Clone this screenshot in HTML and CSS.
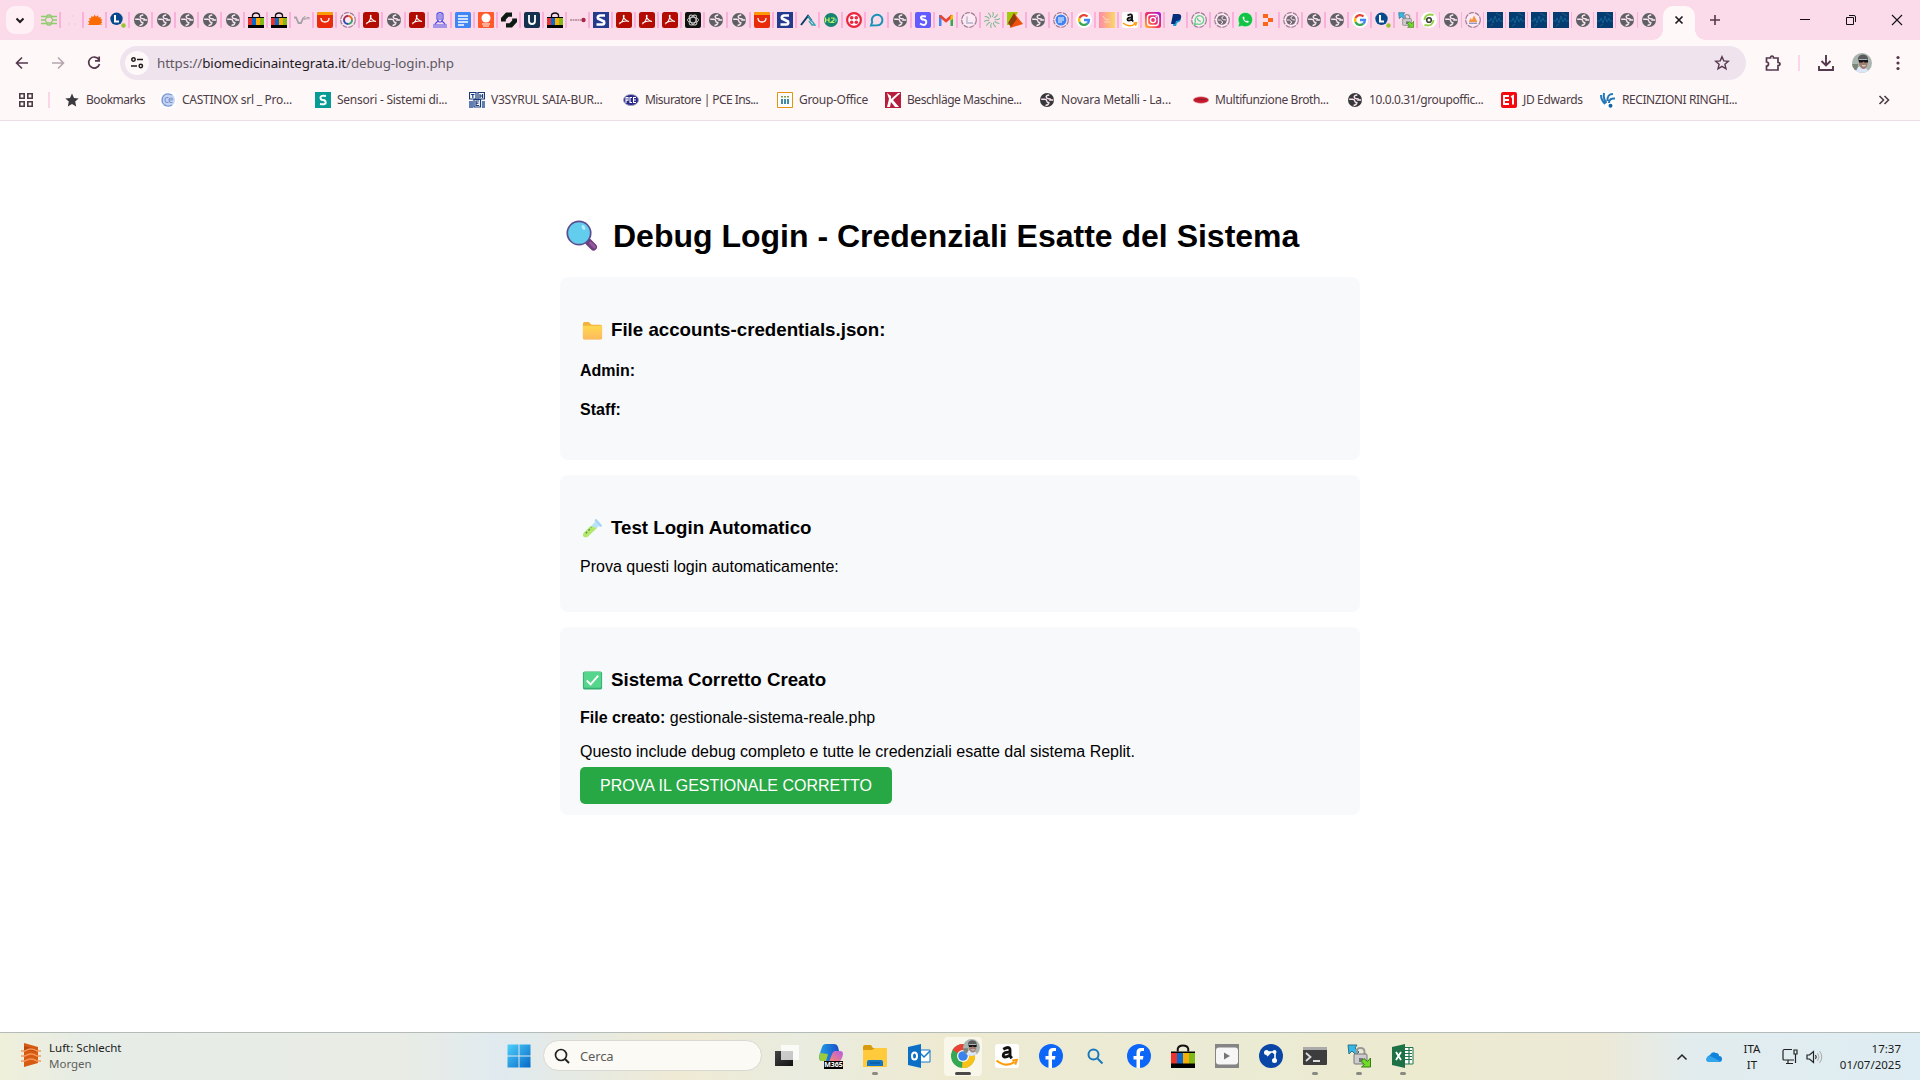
FILE: index.html
```html
<!DOCTYPE html>
<html lang="it">
<head>
<meta charset="utf-8">
<title>Debug Login</title>
<link rel="stylesheet" href="styles.css">
</head>
<body>
<svg class="defs" aria-hidden="true">
  <defs>
    <linearGradient id="g-insta" x1="0" y1="1" x2="1" y2="0"><stop offset="0" stop-color="#ffc233"/><stop offset=".45" stop-color="#f5315c"/><stop offset="1" stop-color="#a21be0"/></linearGradient>
    <linearGradient id="g-peach" x1="0" y1="0" x2="1" y2="0"><stop offset="0" stop-color="#fd8ba8"/><stop offset="1" stop-color="#fdd765"/></linearGradient>
    <linearGradient id="g-win" x1="0" y1="0" x2="1" y2="1"><stop offset="0" stop-color="#4fd0fb"/><stop offset="1" stop-color="#0568c8"/></linearGradient>
    <linearGradient id="g-folder" x1="0" y1="0" x2="0" y2="1"><stop offset="0" stop-color="#ffd84f"/><stop offset="1" stop-color="#fdb95e"/></linearGradient>
    <linearGradient id="g-dark" x1="0" y1="0" x2="1" y2="1"><stop offset="0" stop-color="#444"/><stop offset="1" stop-color="#111"/></linearGradient>
    <linearGradient id="g-m365" x1="0" y1="0" x2="1" y2="0"><stop offset="0" stop-color="#1fa0e8"/><stop offset="1" stop-color="#1a4fc8"/></linearGradient>
    <linearGradient id="g-m365b" x1="0" y1="1" x2="1" y2="0"><stop offset="0" stop-color="#fd8a68"/><stop offset="1" stop-color="#b45be8"/></linearGradient>
  </defs>
  <symbol id="globe" viewBox="0 0 16 16"><circle cx="8" cy="8" r="7" fill="currentColor"/><path d="M10.300 2.900Q7 3.200 7.200 5T9.800 6.700t1.500 1.300h3M2.200 7.300h3.500q2 .2 2.100 1.700t2 1.600q0 2.500-3.300 2.800" fill="none" stroke="#fbe3ee" stroke-width="1.500"/></symbol>
  <symbol id="knot" viewBox="0 0 16 16"><path d="M0 4.500h5l2-1.500h2l2 1.500h5M0 8h4l2-3h4l2 3h4M0 11.500h5l2 1.500h2l2-1.500h5M4 8l2 3h4l2-3" fill="none" stroke="#8fcc6b" stroke-width="1.300"/></symbol>
  <symbol id="faint" viewBox="0 0 16 16"><g fill="#f3cfe0"><circle cx="9" cy="4" r="1"/><circle cx="5" cy="12" r="1.200"/><circle cx="11" cy="12" r="1"/></g></symbol>
  <symbol id="sun" viewBox="0 0 16 16"><path d="M1 13l1.500-2L.8 9.500l2-.8L2 6l2 .3L4.500 4l1.700 1L7.500 2.800 9 4.800 11 3.200l.6 2.200 2.200-.5L13.500 7l2 .7-1.300 1.500 1.300 1.600-1.700.4 1.200 2-2-.8-1 .6H4z" fill="#fb6b04"/></symbol>
  <symbol id="ell" viewBox="0 0 16 16"><circle cx="6.500" cy="6.800" r="6.200" fill="#07498d"/><path d="M5 3v6.500h4" fill="none" stroke="#fff" stroke-width="2"/><circle cx="13.500" cy="13.500" r="2.200" fill="#9bc12d"/></symbol>
  <symbol id="bag" viewBox="0 0 16 16"><path d="M4.500 5V3.200Q5 1 8 1t3.500 2.200V5" fill="none" stroke="#111" stroke-width="1.300"/><path d="M0 5h16v11H0z" fill="#000"/><path d="M0 6h4v7H0z" fill="#e7322d"/><path d="M4 6h4v7H4z" fill="#0968c9"/><path d="M8 6h4v7H8z" fill="#f8ad08"/><path d="M12 6h4v7h-4z" fill="#82b817"/></symbol>
  <symbol id="vgm" viewBox="0 0 16 16"><path d="M0 5.500h2l2.500 5.500H7l2.500-5.500" fill="none" stroke="#a7a0a6" stroke-width="1.800"/><path d="M11.500 4.800h-1.500v2.400h1.500V6M13 7.500V5l1 1.200L15 5v2.500" fill="none" stroke="#a7a0a6"/></symbol>
  <symbol id="ali" viewBox="0 0 16 16"><rect width="16" height="16" rx="2" fill="#e92b0b"/><path d="M0 3V2q0-2 2-2h12q2 0 2 2v1z" fill="#fb9b05"/><path d="M4 6q0 4 4 4t4-4" fill="none" stroke="#fff" stroke-width="1.300"/></symbol>
  <symbol id="ring" viewBox="0 0 16 16"><circle cx="8" cy="8" r="7.300" fill="#fdeaf4" stroke="#a27b99" stroke-width="1.200" stroke-dasharray="5 1"/></symbol>
  <symbol id="ring-color" viewBox="0 0 16 16"><use href="#ring"/><g fill="none" stroke-width="2"><path d="M8 4a4 4 0 0 1 4 4" stroke="#e56a1e"/><path d="M12 8a4 4 0 0 1-4 4" stroke="#359f6b"/><path d="M8 12a4 4 0 0 1-4-4" stroke="#314bb0"/><path d="M4 8a4 4 0 0 1 4-4" stroke="#a92c58"/></g></symbol>
  <symbol id="pdf" viewBox="0 0 16 16"><rect width="16" height="16" rx="2.500" fill="#b30b00"/><path d="M3 12q4-2 5-8 0-1.500-.7 0 .7 4 5.700 5.500-4-1.500-9.500 1.500" fill="none" stroke="#fff" stroke-width="1.200"/></symbol>
  <symbol id="person" viewBox="0 0 16 16"><path d="M5 2q3-3 6 0v5l-2 3H7L5 7zM6 3h4M6 5h4M6 7h4M3 12l3-3m4 0l3 3M1 13h14M1 15h14" fill="none" stroke="#5050e6" stroke-width="1.200"/></symbol>
  <symbol id="docs" viewBox="0 0 16 16"><rect width="16" height="16" rx="1.500" fill="#4086f4"/><path d="M3 4h10M3 7h10M3 10h10M3 13h6" stroke="#fff" stroke-width="1.500"/></symbol>
  <symbol id="bulb" viewBox="0 0 16 16"><rect width="16" height="16" rx="1" fill="#ff592c"/><circle cx="8" cy="6" r="4.500" fill="#fff"/><path d="M4 12h8M5 14h6" stroke="#fff" stroke-width="1.200"/></symbol>
  <symbol id="links" viewBox="0 0 16 16"><path d="M11 0.500v4.300H7.500L4.800 7.500v2H0V6l5-5.500zM5 15.500v-4.300h3.500L11.200 8.500v-2H16V10l-5 5.500z" fill="#0c1a14"/></symbol>
  <symbol id="you" viewBox="0 0 16 16"><rect width="16" height="16" rx="2" fill="#12314e"/><path d="M5 3v6q0 3 3 3t3-3V3" fill="none" stroke="#fff" stroke-width="1.800"/></symbol>
  <symbol id="dash" viewBox="0 0 16 16"><path d="M0 8h11" stroke="#c59aab" stroke-width="2" stroke-dasharray="2 .5"/><circle cx="13.500" cy="8" r="2.200" fill="#aa2447"/></symbol>
  <symbol id="ess" viewBox="0 0 16 16"><rect width="16" height="16" fill="#243a8f"/><path d="M12 3.500H7Q4 4 5 6.500l6 3q1 3-2 3H3.500" fill="none" stroke="#fff" stroke-width="2.600"/></symbol>
  <symbol id="gpt" viewBox="0 0 16 16"><rect width="16" height="16" rx="2" fill="#111"/><g fill="none" stroke="#ccc" stroke-width=".9"><ellipse cx="8" cy="8" rx="5.500" ry="2.800"/><ellipse cx="8" cy="8" rx="5.500" ry="2.800" transform="rotate(60 8 8)"/><ellipse cx="8" cy="8" rx="5.500" ry="2.800" transform="rotate(120 8 8)"/></g></symbol>
  <symbol id="peak" viewBox="0 0 16 16"><path d="M1 13L8 4l3.500 4.500" fill="none" stroke="#0a4167" stroke-width="2"/><path d="M8 4l7 9h-3L9 9" fill="none" stroke="#2aa5ad" stroke-width="1.400"/></symbol>
  <symbol id="h2" viewBox="0 0 16 16"><circle cx="8" cy="8" r="7" fill="#16836f"/><path d="M2.500 5.500v5M6 5.500v5M2.500 8H6M8 6h3v2L8 10.500h3.500" fill="none" stroke="#c5ef65" stroke-width="1.200"/><path d="M12 6l2.500 2-2.500 3" fill="#35c3b3"/></symbol>
  <symbol id="twilio" viewBox="0 0 16 16"><circle cx="8" cy="8" r="6.900" fill="#fff" stroke="#ed243f" stroke-width="2.200"/><g fill="#ed243f"><circle cx="5.700" cy="5.700" r="1.800"/><circle cx="10.300" cy="5.700" r="1.800"/><circle cx="5.700" cy="10.300" r="1.800"/><circle cx="10.300" cy="10.300" r="1.800"/></g></symbol>
  <symbol id="bubble" viewBox="0 0 16 16"><path d="M2 13.500l1.200-3.500A5.300 5.300 0 1 1 8.500 13.300z" fill="none" stroke="#1994b8" stroke-width="2"/></symbol>
  <symbol id="stripe" viewBox="0 0 16 16"><rect width="16" height="16" rx="2" fill="#635bff"/><path d="M11 4.500Q6 3.500 6 5.500t3 2.300 2 3.500T5 11.500" fill="none" stroke="#fff" stroke-width="2"/></symbol>
  <symbol id="gmail" viewBox="0 0 16 16"><path d="M1 3h2.500v11H1z" fill="#4285f4"/><path d="M12.500 3H15v11h-2.500z" fill="#34a853"/><path d="M2 3.800L8 9l6-5.200" fill="none" stroke="#ea4335" stroke-width="2.800"/><path d="M12.500 4L15 2.500V7l-2.500 1.500z" fill="#fbbc04"/></symbol>
  <symbol id="ring-l" viewBox="0 0 16 16"><use href="#ring"/><path d="M6 4.500v6.500h6" fill="none" stroke="#c3c2d4" stroke-width="1.800"/></symbol>
  <symbol id="swirl" viewBox="0 0 16 16"><g stroke="#79b98c" fill="none"><path id="sw" d="M8 5Q10 4 9 0M8 11q-2 1-1 5"/><use href="#sw" transform="rotate(36 8 8)"/><use href="#sw" transform="rotate(72 8 8)"/><use href="#sw" transform="rotate(108 8 8)"/><use href="#sw" transform="rotate(144 8 8)"/></g></symbol>
  <symbol id="kite" viewBox="0 0 16 16"><path d="M0 0h11L4 13H0z" fill="#a5c90d"/><path d="M7 1l9 11-13 4z" fill="#ef520a"/><path d="M7 1L1 11l3 4 6-8z" fill="#923e0b"/></symbol>
  <symbol id="ring-docs" viewBox="0 0 16 16"><use href="#ring"/><circle cx="8" cy="8" r="5.500" fill="#4084f0"/><path d="M5 6h6M5 8h6M5 10h4" stroke="#fff"/></symbol>
  <symbol id="google" viewBox="0 0 16 16"><circle cx="8" cy="8" r="8" fill="#fff"/><g fill="none" stroke-width="2.300"><path d="M11.500 4.500A5 5 0 0 0 3.500 6" stroke="#ea4335"/><path d="M3.500 6a5 5 0 0 0 0 4" stroke="#fbbc05"/><path d="M3.500 10a5 5 0 0 0 7.800 1.700" stroke="#34a853"/><path d="M11.300 11.700A5 5 0 0 0 13 8H8" stroke="#4285f4"/></g></symbol>
  <symbol id="peach" viewBox="0 0 16 16"><path d="M0 0h16v16H0z" fill="url(#g-peach)"/><path d="M4 4l3 4 3-1M5 10h6" stroke="#ffe3cf" stroke-width=".8" fill="none"/></symbol>
  <symbol id="amazon" viewBox="0 0 16 16"><rect width="16" height="16" rx="2" fill="#fff"/><path d="M5.500 3.500Q10 1 10 4v4l1.200 1.500M10 5.500q-4.500-.3-4.500 2t4.500 0" fill="none" stroke="#111" stroke-width="1.900"/><path d="M1 11q6.500 5 12 1M11.500 11l3-.3-1 3" fill="none" stroke="#ff9a0a" stroke-width="1.400"/></symbol>
  <symbol id="insta" viewBox="0 0 16 16"><rect width="16" height="16" rx="2.500" fill="url(#g-insta)"/><rect x="2.500" y="2.500" width="11" height="11" rx="3" fill="none" stroke="#fff" stroke-width="1.400"/><circle cx="8" cy="8" r="2.600" fill="none" stroke="#fff" stroke-width="1.400"/><circle cx="11.200" cy="4.800" r=".8" fill="#fff"/></symbol>
  <symbol id="paypal" viewBox="0 0 16 16"><path d="M6 4h6q3 5-3 7l-1 3H5z" fill="#1d9bdc"/><path d="M5 2h5q4 0 3 4-1 3-5 3l-1 3H3z" fill="#052e7b"/></symbol>
  <symbol id="ring-wa" viewBox="0 0 16 16"><use href="#ring"/><path d="M3.500 12.500l.9-3A4.300 4.300 0 1 1 6.800 12zM6.300 6q.5 3 3.500 3.500" fill="none" stroke="#63d287" stroke-width="1.300"/></symbol>
  <symbol id="ring-globe" viewBox="0 0 16 16"><use href="#ring"/><circle cx="8" cy="8" r="4.800" fill="#716a72"/><path d="M9.500 4.500Q7 5 8 6.500t4 1.500M4 8h2.500q1.500 1 2 2t-1.500 2" fill="none" stroke="#fdeaf4"/></symbol>
  <symbol id="whatsapp" viewBox="0 0 16 16"><path d="M1 15l1-4a7.200 7.200 0 1 1 3 3z" fill="#13c346" stroke="#fff" stroke-width=".5"/><path d="M5.500 5q.5 5 5.500 5.800L12 9.500l-2-1-1 .8L7 7.200l.6-1L7 4.500z" fill="#fff"/></symbol>
  <symbol id="replit" viewBox="0 0 16 16"><path d="M3 2h5v4H3zM8 6h5v4H8zM3 10h5v4H3z" fill="#fd6418"/></symbol>
  <symbol id="lock" viewBox="0 0 24 24"><path d="M1 1h9L8 4l4 4-3 3-4-4-3 3z" fill="#36b7e6" stroke="#2c738b"/><path d="M9.500 12V8q0-4 4-4t4 4v4" fill="none" stroke="#999" stroke-width="2"/><rect x="7" y="10" width="13" height="10" rx="1" fill="#ccc" stroke="#777"/><path d="M12 14h4v4h-4z" fill="#777"/><path d="M23.500 14v9h-9l3-2.500-3.500-3 3-3 3.500 3z" fill="#70dc25" stroke="#357d16"/></symbol>
  <symbol id="greeno" viewBox="0 0 16 16"><circle cx="8" cy="8" r="8" fill="#fff"/><path d="M12.500 3Q4 1 3.500 8M3.500 13q8.500 2 9-5" fill="none" stroke="#9bcf4b" stroke-width="2"/><circle cx="8" cy="8" r="2.300" fill="none" stroke="#384136" stroke-width="1.600"/></symbol>
  <symbol id="ring-fire" viewBox="0 0 16 16"><use href="#ring"/><path d="M3.800 10l1.700-4 1.500 2 2-4.500 3.500 6.500z" fill="#f49541"/><path d="M4 11.200h8" stroke="#6474aa"/></symbol>
  <symbol id="wave" viewBox="0 0 16 16"><path d="M0 0h16v16H0z" fill="#033c70"/><path d="M0 9h3l1-3 2 5 2-7 2 6 2-4 1 3h3" fill="none" stroke="#2076a6" stroke-width=".6"/><path d="M9 1l5 3M3 14l3-2" stroke="#2d6189" stroke-width=".8"/></symbol>
  <symbol id="facebook" viewBox="0 0 24 24"><circle cx="12" cy="12" r="12" fill="#0c67f9"/><path d="M17 7h-2q-2 0-2 2v3h3.500l-.6 3.500H13V24h-3.500v-8.500h-3V12h3V8.500Q9.500 4 14 4h3z" fill="#fff"/></symbol>
  <symbol id="avatar" viewBox="0 0 20 20"><clipPath id="round"><circle cx="10" cy="10" r="10"/></clipPath><g clip-path="url(#round)"><path d="M0 0h20v20H0z" fill="#aab5b0"/><path d="M0 11h6v6H0z" fill="#788577"/><path d="M3 20l3-6 4-1 5 3 2 4z" fill="#dce6f8"/><path d="M7 7h8.500v4q-1 5-4 5T7 11z" fill="#a07c70"/><path d="M6 8Q5 2 11 1.500 17 2 16 8l-1-2H7z" fill="#5a5a5c"/><path d="M6.500 7H16v2.500h-3.500L11.500 8.500l-1.200 1H7z" fill="#171519"/><path d="M10 12.500q2 1 3.500 0" stroke="#eee" fill="none"/></g></symbol>
</svg>

<header class="browser">
  <div class="tabstrip">
    <button class="tab-search"><svg width="12" height="12" viewBox="0 0 12 12"><path d="M2.500 4.500L6 8l3.500-3.500" fill="none" stroke="#1f1a1d" stroke-width="2"/></svg></button>
    <div class="tabs">
      <i class="tab"><svg><use href="#knot"/></svg></i><i class="tab"><svg><use href="#faint"/></svg></i><i class="tab"><svg><use href="#sun"/></svg></i><i class="tab"><svg><use href="#ell"/></svg></i>
      <i class="tab"><svg><use href="#globe"/></svg></i><i class="tab"><svg><use href="#globe"/></svg></i><i class="tab"><svg><use href="#globe"/></svg></i><i class="tab"><svg><use href="#globe"/></svg></i><i class="tab"><svg><use href="#globe"/></svg></i>
      <i class="tab"><svg><use href="#bag"/></svg></i><i class="tab"><svg><use href="#bag"/></svg></i><i class="tab"><svg><use href="#vgm"/></svg></i><i class="tab"><svg><use href="#ali"/></svg></i><i class="tab"><svg><use href="#ring-color"/></svg></i>
      <i class="tab"><svg><use href="#pdf"/></svg></i><i class="tab"><svg><use href="#globe"/></svg></i><i class="tab"><svg><use href="#pdf"/></svg></i><i class="tab"><svg><use href="#person"/></svg></i><i class="tab"><svg><use href="#docs"/></svg></i><i class="tab"><svg><use href="#bulb"/></svg></i>
      <i class="tab"><svg><use href="#links"/></svg></i><i class="tab"><svg><use href="#you"/></svg></i><i class="tab"><svg><use href="#bag"/></svg></i><i class="tab"><svg><use href="#dash"/></svg></i><i class="tab"><svg><use href="#ess"/></svg></i>
      <i class="tab"><svg><use href="#pdf"/></svg></i><i class="tab"><svg><use href="#pdf"/></svg></i><i class="tab"><svg><use href="#pdf"/></svg></i><i class="tab"><svg><use href="#gpt"/></svg></i><i class="tab"><svg><use href="#globe"/></svg></i><i class="tab"><svg><use href="#globe"/></svg></i>
      <i class="tab"><svg><use href="#ali"/></svg></i><i class="tab"><svg><use href="#ess"/></svg></i><i class="tab"><svg><use href="#peak"/></svg></i><i class="tab"><svg><use href="#h2"/></svg></i><i class="tab"><svg><use href="#twilio"/></svg></i><i class="tab"><svg><use href="#bubble"/></svg></i>
      <i class="tab"><svg><use href="#globe"/></svg></i><i class="tab"><svg><use href="#stripe"/></svg></i><i class="tab"><svg><use href="#gmail"/></svg></i><i class="tab"><svg><use href="#ring-l"/></svg></i><i class="tab"><svg><use href="#swirl"/></svg></i><i class="tab"><svg><use href="#kite"/></svg></i>
      <i class="tab"><svg><use href="#globe"/></svg></i><i class="tab"><svg><use href="#ring-docs"/></svg></i><i class="tab"><svg><use href="#google"/></svg></i><i class="tab"><svg><use href="#peach"/></svg></i><i class="tab"><svg><use href="#amazon"/></svg></i><i class="tab"><svg><use href="#insta"/></svg></i>
      <i class="tab"><svg><use href="#paypal"/></svg></i><i class="tab"><svg><use href="#ring-wa"/></svg></i><i class="tab"><svg><use href="#ring-globe"/></svg></i><i class="tab"><svg><use href="#whatsapp"/></svg></i><i class="tab"><svg><use href="#replit"/></svg></i><i class="tab"><svg><use href="#ring-globe"/></svg></i>
      <i class="tab"><svg><use href="#globe"/></svg></i><i class="tab"><svg><use href="#globe"/></svg></i><i class="tab"><svg><use href="#google"/></svg></i><i class="tab"><svg><use href="#ell"/></svg></i><i class="tab"><svg><use href="#lock"/></svg></i>
      <i class="tab slim"><svg><use href="#greeno"/></svg></i><i class="tab slim"><svg><use href="#globe"/></svg></i><i class="tab slim"><svg><use href="#ring-fire"/></svg></i><i class="tab slim"><svg><use href="#wave"/></svg></i><i class="tab slim"><svg><use href="#wave"/></svg></i><i class="tab slim"><svg><use href="#wave"/></svg></i><i class="tab slim"><svg><use href="#wave"/></svg></i>
      <i class="tab slim"><svg><use href="#globe"/></svg></i><i class="tab slim"><svg><use href="#wave"/></svg></i><i class="tab slim"><svg><use href="#globe"/></svg></i><i class="tab slim last"><svg><use href="#globe"/></svg></i>
    </div>
    <div class="tab-active"><svg width="10" height="10" viewBox="0 0 10 10"><path d="M1.500 1.500l7 7m0-7l-7 7" stroke="#1f1a1d" stroke-width="1.700"/></svg></div>
    <button class="new-tab"><svg width="12" height="12" viewBox="0 0 12 12"><path d="M6 1v10M1 6h10" stroke="#55384c" stroke-width="1.600"/></svg></button>
    <div class="window-controls">
      <svg width="12" height="12"><path d="M1 5.500h10" stroke="#111"/></svg>
      <svg width="12" height="12"><path d="M1.500 3.500h7v7h-7zM4 1.500h5q1.500 0 1.500 1.500v5" fill="none" stroke="#111"/></svg>
      <svg width="12" height="12"><path d="M1 1l10 10m0-10L1 11" stroke="#111" stroke-width="1.100"/></svg>
    </div>
  </div>

  <div class="toolbar">
    <svg class="back" width="16" height="16" viewBox="0 0 16 16"><path d="M14 8H3m5-5.500L2.500 8 8 13.500" fill="none" stroke="#55384c" stroke-width="1.600"/></svg>
    <svg class="forward" width="16" height="16" viewBox="0 0 16 16"><path d="M2 8h11M8 2.500L13.500 8 8 13.500" fill="none" stroke="#b6a5ae" stroke-width="1.600"/></svg>
    <svg class="reload" width="16" height="16" viewBox="0 0 16 16"><path d="M12.800 4.500A5.500 5.500 0 1 0 13.500 9M13.200 1.500v4.300H9" fill="none" stroke="#55384c" stroke-width="1.700"/></svg>
    <div class="omnibox">
      <span class="site-info"><svg width="16" height="16" viewBox="0 0 16 16"><g fill="none" stroke="#1f1a1d" stroke-width="1.500"><circle cx="4.500" cy="4.500" r="1.700"/><path d="M8 4.500h6M2 11h6"/><circle cx="11.800" cy="11" r="1.700"/></g></svg></span>
      <span class="url">https://<b>biomedicinaintegrata.it</b>/debug-login.php</span>
      <svg class="star" width="16" height="16" viewBox="0 0 16 16"><path d="M8 1.700l1.800 4.200 4.600.4-3.500 3 1.100 4.500L8 11.400l-4 2.400 1.100-4.500-3.500-3 4.600-.4z" fill="none" stroke="#55384c" stroke-width="1.400"/></svg>
    </div>
    <svg class="puzzle" width="18" height="18" viewBox="0 0 18 18"><path d="M2.500 4h4q0-2 1.500-2t1.500 2H14v4.500q2 0 2 1.500t-2 1.500V16H2.500v-4q2 0 2-2t-2-2z" fill="none" stroke="#55384c" stroke-width="1.700"/></svg>
    <i class="divider"></i>
    <svg class="download" width="18" height="18" viewBox="0 0 18 18"><path d="M9 1v10M4.500 7L9 11.500 13.500 7M2 12v4h14v-4" fill="none" stroke="#55384c" stroke-width="1.900"/></svg>
    <svg class="profile" width="20" height="20"><use href="#avatar"/></svg>
    <svg class="kebab" width="4" height="16"><g fill="#55384c"><circle cx="2" cy="2.500" r="1.600"/><circle cx="2" cy="8" r="1.600"/><circle cx="2" cy="13.500" r="1.600"/></g></svg>
  </div>

  <nav class="bookmarks">
    <svg class="apps" width="14" height="14" viewBox="0 0 14 14"><path d="M.8.800h4.400v4.400H.8zM8.800.800h4.400v4.400H8.800zM.8 8.800h4.400v4.400H.8zM8.800 8.800h4.400v4.400H8.800z" fill="none" stroke="#4b3c45" stroke-width="1.600"/></svg>
    <i class="divider"></i>
    <div class="marks">
      <a class="bm bm-1"><svg viewBox="0 0 16 16"><path d="M8 1.500l2 4.500 4.700.4-3.500 3.200 1 4.900L8 12l-4.200 2.500 1-4.900L1.300 6.400 6 6z" fill="#3d3a3f"/></svg><span>Bookmarks</span></a>
      <a class="bm bm-2"><svg viewBox="0 0 16 16"><path d="M0 0h16v16H0z" fill="#fff"/><circle cx="8" cy="8" r="7" fill="#c6d4f0"/><path d="M12 3Q4 0 2.500 6t4 7.500M8.500 5.500Q5 5 5 8t3.500 2.500M9 8h3q1-2-1-2T9 8q0 3 3.500 2.500M4 13q5 2 8 0" fill="none" stroke="#7794d2" stroke-width="1.100"/></svg><span>CASTINOX srl _ Pro...</span></a>
      <a class="bm bm-3"><svg viewBox="0 0 16 16"><path d="M0 0h16v16H0z" fill="#079b96"/><path d="M11 4Q5.500 3 5.500 5.500T8 8t2.700 2.500T5 12" fill="none" stroke="#fff" stroke-width="2"/></svg><span>Sensori - Sistemi di...</span></a>
      <a class="bm bm-4"><svg viewBox="0 0 16 16"><path d="M0 9h4v7H0zM13 9h3v7h-3z" fill="#5b7fb4"/><path d="M.5.500h6.500v6.500H.5zM9 .5h6.500v6.500H9zM5 7.500h6.500V15H5z" fill="#fff" stroke="#173a7b" stroke-width="1.200"/><path d="M2 2.500h3.500M3.800 2.500v3.500M11 2v4m2.500-4v4M11 4h2.500M10 9H7v4.500h3M7 11.200h2.500" fill="none" stroke="#173a7b" stroke-width="1.200"/></svg><span>V3SYRUL SAIA-BUR...</span></a>
      <a class="bm bm-5"><svg viewBox="0 0 16 16"><ellipse cx="8" cy="8" rx="7.500" ry="5.500" fill="#28278b" stroke="#a0a4bd"/><path d="M3 11V5.500h2v2.700H3M9 5.500H7v5h2M13 5.500h-2.500v5H13M10.500 8H13" fill="none" stroke="#fff" stroke-width="1.100"/></svg><span>Misuratore | PCE Ins...</span></a>
      <a class="bm bm-6"><svg viewBox="0 0 16 16"><path d="M.5.500h15v15H.5z" fill="#fff" stroke="#e5930f"/><path d="M5 7v5M8 7v5M11 7v5" stroke="#2c809b" stroke-width="1.800"/><path d="M4 4.800h8" stroke="#7e9d47" stroke-width="1.500" stroke-dasharray="2 1"/></svg><span>Group-Office</span></a>
      <a class="bm bm-7"><svg viewBox="0 0 16 16"><path d="M0 0h16v16H0z" fill="#b71d3d"/><path d="M2 1l4 3v3l7-6h2.500L8 8l6 7h-4L6 10l-1 5H2l2-8z" fill="#fff"/></svg><span>Beschläge Maschine...</span></a>
      <a class="bm bm-8"><svg class="dark"><use href="#globe"/></svg><span>Novara Metalli - La...</span></a>
      <a class="bm bm-9"><svg viewBox="0 0 16 16"><ellipse cx="8" cy="8" rx="7.800" ry="3.300" fill="#c7182b" stroke="#dba8ae" stroke-width=".6"/><path d="M4 7.500h9" stroke="#8b1e30"/></svg><span>Multifunzione Broth...</span></a>
      <a class="bm bm-10"><svg class="dark"><use href="#globe"/></svg><span>10.0.0.31/groupoffic...</span></a>
      <a class="bm bm-11"><svg viewBox="0 0 16 16"><rect width="16" height="16" rx="2" fill="#f5080e"/><path d="M8 4H3v8h5M3 8h5M10 5l2-1v8.500" fill="none" stroke="#fff" stroke-width="1.900"/></svg><span>JD Edwards</span></a>
      <a class="bm bm-12"><svg viewBox="0 0 16 16"><path d="M0 0h16v16H0z" fill="#fff"/><path d="M1 3q0 5 4 9M4 1q-1 6 2.500 10M7.500 9Q7 2 13 2M9 11q0-5 6-4.500" fill="none" stroke="#2476b6" stroke-width="2"/><circle cx="10.500" cy="13.800" r="2" fill="#1263a7"/></svg><span>RECINZIONI RINGHI...</span></a>
    </div>
    <svg class="more" width="12" height="10"><path d="M1.500 1l4 4-4 4M6.500 1l4 4-4 4" fill="none" stroke="#4b3c45" stroke-width="1.600"/></svg>
  </nav>
</header>

<main class="page">
  <h1><svg width="40" height="40" viewBox="0 0 40 40"><path d="M26.500 26l5 5" stroke="#6d3f7d" stroke-width="7" stroke-linecap="round"/><path d="M28.500 27l4 4" stroke="#94599d" stroke-width="3" stroke-linecap="round"/><circle cx="17" cy="17" r="11.700" fill="#62cdec" stroke="#5c4d91" stroke-width="1.700"/><ellipse cx="21.500" cy="11.500" rx="1.600" ry="2.600" fill="#b3edfb" transform="rotate(-30 21.500 11.500)"/></svg><span>Debug Login - Credenziali Esatte del Sistema</span></h1>
  <section class="card card-file">
    <h3><svg width="23" height="23" viewBox="0 0 24 24"><path d="M2 5q0-2 2-2h4l3 3h9q2 0 2 2v11q0 2-2 2H4q-2 0-2-2z" fill="#f4b13c"/><rect x="2" y="7" width="20" height="14.500" rx="1.500" fill="url(#g-folder)"/></svg><span>File accounts-credentials.json:</span></h3>
    <p><strong>Admin:</strong></p>
    <p class="staff"><strong>Staff:</strong></p>
  </section>
  <section class="card card-test">
    <h3><svg width="23" height="23" viewBox="0 0 24 24"><path d="M15 5l4 4L7 20.500q-2 1.500-4 0t0-4z" fill="#b9e3fa"/><path d="M10 9.500l6.500 2L7 20.500q-2 1.500-4 0t0-4z" fill="#b4e866"/><path d="M5 17l6-6" stroke="#47915b" stroke-width="1.400" stroke-dasharray="2 2"/><path d="M15.500 3.500l5 5.500" stroke="#a5d4f4" stroke-width="2.600" stroke-linecap="round"/></svg><span>Test Login Automatico</span></h3>
    <p>Prova questi login automaticamente:</p>
  </section>
  <section class="card card-done">
    <h3><svg width="23" height="23" viewBox="0 0 24 24"><rect x="2" y="2.500" width="20" height="19" rx="2" fill="#35ae71"/><rect x="3" y="3" width="18" height="16.500" rx="1" fill="#55d68c"/><path d="M6 12l4 4 8-9" fill="none" stroke="#fff" stroke-width="2"/></svg><span>Sistema Corretto Creato</span></h3>
    <p><strong>File creato:</strong> gestionale-sistema-reale.php</p>
    <p class="note">Questo include debug completo e tutte le credenziali esatte dal sistema Replit.</p>
    <a class="button">PROVA IL GESTIONALE CORRETTO</a>
  </section>
</main>

<footer class="taskbar">
  <div class="weather">
    <svg width="20" height="24" viewBox="0 0 20 24"><path d="M3 0l14 4v16L3 24z" fill="#d75a13"/><path d="M3 3l12 3v3q-6-3-12 0z" fill="#b8480c"/><path d="M0 8h4q6-4 12 0h4M0 13h4q6-4 12 0h4M0 18h4q6-4 12 0h4" fill="none" stroke="#f59758" stroke-width="1.500"/></svg>
    <div><span class="line-1">Luft: Schlecht</span><span class="line-2">Morgen</span></div>
  </div>
  <div class="launcher">
    <div class="app"><svg viewBox="0 0 24 24"><path d="M.5.500h11v11H.5zM12.500.500h11v11h-11zM.5 12.500h11v11H.5zM12.500 12.500h11v11h-11z" fill="url(#g-win)"/></svg></div>
    <div class="search"><svg width="16" height="16" viewBox="0 0 16 16"><circle cx="7" cy="7" r="5.500" fill="none" stroke="#222" stroke-width="1.700"/><path d="M11 11l4 4" stroke="#222" stroke-width="2"/></svg><span>Cerca</span></div>
    <div class="app"><svg viewBox="0 0 24 24"><path d="M0 7h18v15H0z" fill="url(#g-dark)"/><path d="M6 1h18v15H6z" fill="#fff" opacity=".75"/></svg></div>
    <div class="app"><svg viewBox="0 0 24 24"><path d="M7 0h8q3 0 4 3l1 4h-3q-2 0-3 3l-2 7H2q-3-2-2-5L3 3q1-3 4-3z" fill="url(#g-m365)"/><path d="M1 9l8 1-2 7H2q-3-1-1-8z" fill="#9ccb3c"/><path d="M17 7h4q3 0 3 3-1 7-5 8h-9l3-8q1-3 4-3z" fill="url(#g-m365b)"/></svg><em>M365</em></div>
    <div class="app open"><svg viewBox="0 0 24 24"><path d="M0 3q0-2 2-2h6l2 3h12q2 0 2 2v5H0z" fill="#d99b0e"/><path d="M0 6h9l3-2h12v19H0z" fill="#ffcb3c"/><path d="M4 22v-4q0-2 2-2h12q2 0 2 2v4z" fill="#1276c4"/><path d="M7 19h10" stroke="#0a549b" stroke-width="1.200"/></svg></div>
    <div class="app"><svg viewBox="0 0 24 24"><path d="M12 6h11v12H12z" fill="#fff" stroke="#1779ca"/><path d="M13 9l4 4 6-6" fill="none" stroke="#1779ca" stroke-width="1.500"/><path d="M1 3l13-3v24L1 21z" fill="#0b70c5"/><ellipse cx="7.500" cy="12" rx="2.500" ry="3.500" fill="none" stroke="#fff" stroke-width="2"/></svg></div>
    <div class="app active"><svg viewBox="0 0 24 24"><circle cx="12" cy="12" r="12" fill="#34a853"/><path d="M12 12L1.600 6A12 12 0 0 1 22.400 6z" fill="#ea4335"/><path d="M12 12l10.400-6A12 12 0 0 1 11 24z" fill="#fbc116"/><circle cx="12" cy="12" r="6" fill="#fff"/><circle cx="12" cy="12" r="4.800" fill="#3b82ed"/></svg><svg class="badge" viewBox="0 0 20 20"><use href="#avatar"/></svg></div>
    <div class="app"><svg><use href="#amazon"/></svg></div>
    <div class="app"><svg><use href="#facebook"/></svg></div>
    <div class="app"><svg viewBox="0 0 24 24"><circle cx="10.500" cy="10.500" r="5" fill="none" stroke="#1878be" stroke-width="2"/><path d="M14.500 14.500l5 5" stroke="#1878be" stroke-width="2"/></svg></div>
    <div class="app"><svg><use href="#facebook"/></svg></div>
    <div class="app"><svg><use href="#bag"/></svg></div>
    <div class="app"><svg viewBox="0 0 24 24"><path d="M0 0h24v24H0z" fill="#858585"/><rect x="1" y="3.500" width="22" height="17" rx="3" fill="#f6f6f6"/><path d="M9 8.500l6 3.500-6 3.500z" fill="#757575"/></svg></div>
    <div class="app"><svg viewBox="0 0 24 24"><circle cx="12" cy="12" r="12" fill="#0a46a6"/><path d="M7 8h9v8M12 8l-4 4" fill="none" stroke="#fff" stroke-width="1.600"/><g fill="#fff"><circle cx="7.500" cy="8.500" r="2.500"/><circle cx="15.500" cy="8" r="2"/><circle cx="15.500" cy="16.500" r="2.500"/></g></svg></div>
    <div class="app open"><svg viewBox="0 0 24 24"><rect y="3" width="24" height="18" rx="1" fill="#3d3d3d"/><path d="M0 3h24v3H0z" fill="#aaa"/><path d="M3 9l4.500 4L3 17M10 17h7" fill="none" stroke="#ddd" stroke-width="1.800"/></svg></div>
    <div class="app open"><svg><use href="#lock"/></svg></div>
    <div class="app open"><svg viewBox="0 0 24 24"><path d="M12 3.500h10V20H12z" fill="#fff" stroke="#20764a"/><path d="M14 6.500h7M14 9.500h7M14 12.500h7M14 15.500h7M18 4v16" stroke="#20764a" stroke-width="1.200"/><path d="M1 3l13-3v24L1 21z" fill="#1d7145"/><path d="M5 8l5 8M10 8l-5 8" stroke="#fff" stroke-width="1.800"/></svg></div>
  </div>
  <div class="tray">
    <svg class="chevron" width="12" height="12"><path d="M1.500 8.500L6 4l4.500 4.500" fill="none" stroke="#222" stroke-width="1.500"/></svg>
    <svg class="cloud" width="16" height="12" viewBox="0 0 16 12"><path d="M1 8q0-3 3-4Q6 0 10 2q3 0 3 3 3 0 3 3 0 3-3 3H3Q1 11 1 8z" fill="#1083db"/><path d="M0 8q1-3 4-3l10 5q-1 1-2 1H3q-3 0-3-3z" fill="#32a5ed"/></svg>
    <div class="lang"><span>ITA</span><span>IT</span></div>
    <svg class="net" width="17" height="17" viewBox="0 0 17 17"><path d="M10 1.500H2.500Q1 1.500 1 3v8q0 1 1 1h10M6 12v3M4 15.500h7M12 2h3v4h-3zM13.500 6v9" fill="none" stroke="#222" stroke-width="1.200"/></svg>
    <svg class="vol" width="17" height="14" viewBox="0 0 17 14"><path d="M1 5h2.500L7.500 1.500v11L3.500 9H1zM9.500 5q1.500 2 0 4" fill="none" stroke="#222" stroke-width="1.200"/><path d="M11.500 3q3 4 0 8M13.500 1q4.500 6 0 12" fill="none" stroke="#aaa"/></svg>
    <div class="clock"><span>17:37</span><span>01/07/2025</span></div>
  </div>
</footer>
</body>
</html>
```

FILE: styles.css
```css
* { box-sizing: border-box; }
body {
  margin: 0; width: 1920px; height: 1080px; overflow: hidden;
  display: flex; flex-direction: column;
  background: #fff; color: #000;
  font-family: "Liberation Sans", Arial, sans-serif; font-size: 16px;
}
svg { display: block; flex: none; }
button { border: 0; padding: 0; background: none; }
.defs { position: absolute; width: 0; height: 0; }

/* browser chrome */
.browser { flex: none; height: 121px; background: #fff8f8; border-bottom: 1px solid #ecdce5; font-family: "Noto Sans", sans-serif; }
.tabstrip { height: 40px; display: flex; background: #fbdaea; padding-left: 6px; }
.tab-search { width: 28px; height: 28px; margin-top: 6px; border-radius: 9px; background: #fff0f6; display: grid; place-items: center; }
.tabs { display: flex; margin-left: 4px; height: 40px; align-items: center; width: 1625px; flex: none; }
.tab { display: flex; flex: none; width: 23px; height: 16px; padding-left: 3px; color: #5f6065; }
.tab svg { width: 16px; height: 16px; }
.tab::after { content: ""; width: 2px; height: 16px; margin-left: 2px; background: #fbb0db; }
.tab.slim { width: 22px; }
.tab.last::after { display: none; }
.tab-active { position: relative; flex: none; width: 32px; height: 34px; margin-top: 6px; border-radius: 10px 10px 0 0; background: #fff8f8; display: grid; place-items: center; padding-bottom: 6px; }
.tab-active::before, .tab-active::after { content: ""; position: absolute; bottom: 0; width: 10px; height: 10px; }
.tab-active::before { right: 100%; background: radial-gradient(circle at 0 0, transparent 9.500px, #fff8f8 10px); }
.tab-active::after { left: 100%; background: radial-gradient(circle at 100% 0, transparent 9.500px, #fff8f8 10px); }
.new-tab { width: 12px; margin-left: 14px; display: grid; place-items: center; }
.window-controls { display: flex; gap: 34px; align-items: center; margin-left: auto; padding-right: 17px; }

.toolbar { height: 46px; display: flex; align-items: center; padding-left: 14px; border-radius: 8px 8px 0 0; }
.forward { margin-left: 20px; }
.reload { margin-left: 20px; }
.omnibox { flex: none; width: 1626px; height: 34px; margin-left: 18px; border-radius: 17px; background: #efe4ee; display: flex; align-items: center; padding: 0 16px 0 5px; }
.site-info { width: 24px; height: 24px; border-radius: 50%; background: #fff8f8; display: grid; place-items: center; }
.url { margin-left: 8px; font-size: 13.400px; letter-spacing: -.12px; color: #5f5862; white-space: nowrap; }
.url b { font-weight: 400; color: #1f1a1d; }
.star { margin-left: auto; }
.puzzle { margin-left: 18px; }
.divider { width: 2px; height: 16px; background: #fbd5e8; }
.toolbar .divider { margin-left: 16px; }
.download { margin-left: 17px; }
.profile { margin-left: 17px; }
.kebab { margin-left: 24px; }

.bookmarks { height: 28px; display: flex; align-items: center; padding: 0 28px 0 19px; }
.bookmarks .divider { margin-left: 15px; }
.marks { display: flex; margin-left: 14px; }
.bm { display: flex; align-items: center; gap: 6px; font-size: 12px; line-height: 16px; color: #4b3c45; white-space: nowrap; }
.bm svg { width: 16px; height: 16px; }
.bm .dark { color: #37383b; }
.bm-1 { width: 96px; letter-spacing: -.55px; }
.bm-2 { width: 155px; letter-spacing: -.25px; }
.bm-3 { width: 154px; letter-spacing: -.25px; }
.bm-4 { width: 154px; letter-spacing: -.27px; }
.bm-5 { width: 154px; letter-spacing: -.56px; }
.bm-6 { width: 108px; letter-spacing: -.3px; }
.bm-7 { width: 154px; letter-spacing: -.45px; }
.bm-8 { width: 154px; letter-spacing: -.2px; }
.bm-9 { width: 154px; letter-spacing: -.4px; }
.bm-10 { width: 154px; letter-spacing: -.4px; }
.bm-11 { width: 99px; letter-spacing: -.35px; }
.bm-12 { letter-spacing: -.42px; }
.more { margin-left: auto; margin-right: 2px; }

/* page */
.page { flex: 1; width: 800px; margin: 0 auto; padding-top: 94px; }
h1 { margin: 0 0 19px; height: 43px; display: flex; align-items: center; font-size: 32px; gap: 11px; padding-left: 2px; white-space: nowrap; }
h1 svg { margin-top: -1px; }
.card { background: #f8f9fb; border-radius: 8px; padding: 41px 20px 0; margin-bottom: 15px; }
.card-file { height: 183px; }
.card-test { height: 137px; }
.card-done { height: 188px; }
h3 { margin: 0; height: 24px; display: flex; align-items: center; gap: 7px; padding-left: 1px; font-size: 18.720px; }
p { margin: 0; line-height: 18px; padding-top: 18px; }
.card-file p { padding-top: 20px; }
.card-file .staff { padding-top: 21px; }
.card-done p { padding-top: 17px; }
.card-done .note { padding-top: 16px; }
.button { display: block; width: 312px; height: 37px; margin-top: 6px; border-radius: 5px; background: #28a745; color: #fff; text-align: center; line-height: 37px; }

/* taskbar */
.taskbar {
  flex: none; height: 48px; display: flex; border-top: 1px solid #b4bbb9;
  font-family: "Noto Sans", sans-serif; font-size: 11.500px; color: #1b1b1b;
  background: linear-gradient(90deg, #efefda 0, #e6ece6 90px, #e9ece5 400px, #e0eaef 500px, #efead4 680px, #e9ecdf 800px, #eeead2 940px, #ebebd5 1200px, #eceacf 1420px, #ece9d7 1600px, #e2ecee 1690px, #deedf3 1920px);
}
.weather { display: flex; width: 496px; padding: 10px 0 0 21px; gap: 9px; }
.weather span { display: block; line-height: 16px; white-space: nowrap; }
.weather > div { margin-top: -3px; margin-left: -1px; }
.line-2 { color: #5d5f5e; }
.launcher { display: flex; align-items: flex-start; }
.app { position: relative; width: 44px; height: 46px; display: grid; place-items: center; }
.app > svg { width: 24px; height: 24px; }
.app:first-child { width: 46px; }
.search { width: 219px; height: 31px; margin: 7px 2px 0 1px; border: 1px solid #d8d9d2; border-radius: 16px; background: #fbfaf5; display: flex; align-items: center; padding-left: 10px; gap: 10px; font-size: 13px; letter-spacing: -.15px; color: #5d5c5a; }
.search + .app { margin-left: 1px; }
.app em { position: absolute; left: 15px; top: 28px; width: 19px; height: 8px; background: #000; color: #fff; font: 700 7px/8px "Noto Sans", sans-serif; text-align: center; }
.app.open::after, .app.active::after { content: ""; position: absolute; bottom: 4px; left: 19px; width: 6px; height: 3px; border-radius: 2px; background: #898a82; }
.app.active::after { left: 14px; width: 16px; background: #494948; }
.app.active::before { content: ""; position: absolute; inset: 4px 3px 3px 3px; background: #f8f7ea; border-radius: 4px; }
.app.active > svg { position: relative; }
.app.active > .badge { position: absolute; left: 22px; top: 6px; width: 17px; height: 17px; }
.tray { flex: 1; display: flex; justify-content: flex-end; align-items: center; padding-right: 19px; }
.tray div span { display: block; line-height: 16px; }
.cloud { margin-left: 18px; }
.lang { width: 24px; margin-left: 18px; text-align: center; }
.net { margin-left: 18px; }
.vol { margin-left: 7px; }
.clock { width: 64px; margin-left: 14px; text-align: right; white-space: nowrap; }
```
